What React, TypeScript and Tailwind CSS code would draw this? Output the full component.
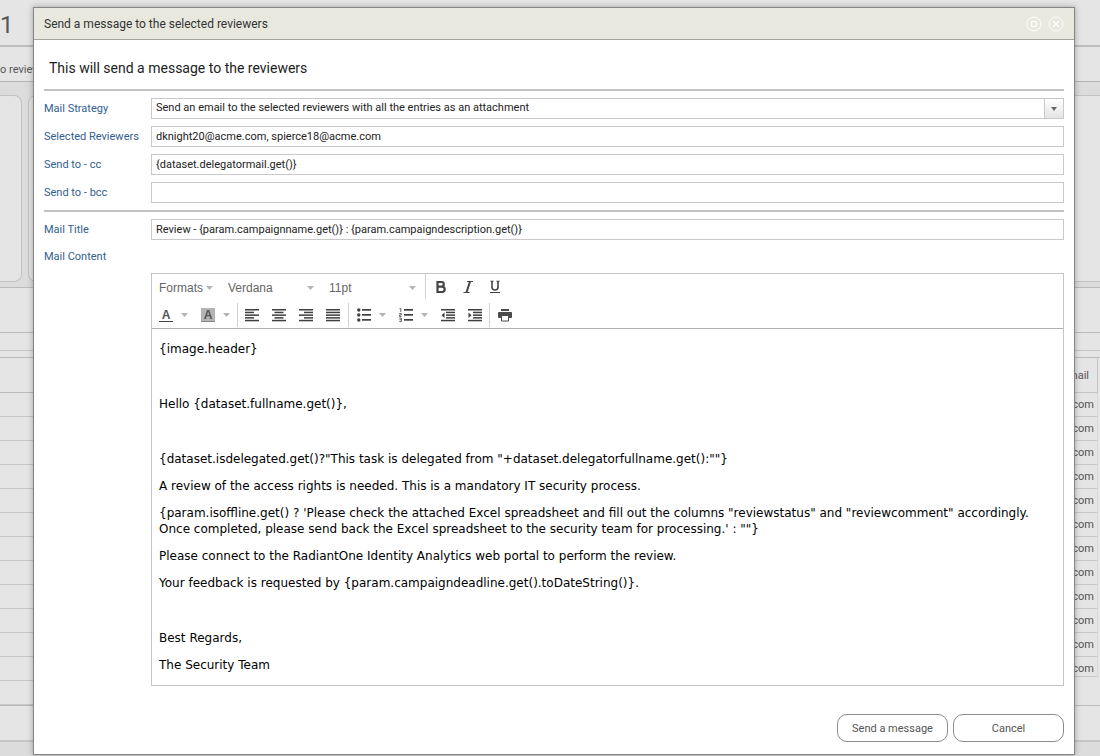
import type { ReactNode } from 'react';

const addresses = Array.from({ length: 12 }, (_, i) => i);
const leftRows = Array.from({ length: 13 }, (_, i) => i);

const fieldClass = "h-[21px] w-full min-w-0 border border-[#c9c9c9] bg-white px-1 text-[11px] text-[#222] focus:outline-none";
const labelClass = "w-[107px] shrink-0 pt-[2px] text-[11px] text-[#31608f]";

function Caret() {
  return (
    <svg width="7" height="4" viewBox="0 0 7 4" fill="#b4b4b4">
      <path d="M0 0h7L3.500 4z" />
    </svg>
  );
}

// a set of horizontal bars, each one [x, y, width]
function Bars({ bars, children }: { bars: number[][]; children?: ReactNode }) {
  return (
    <svg width="14" height="14" viewBox="0 0 14 14" fill="#3f3f3f">
      {bars.map(([x, y, w]) => (
        <rect key={y} x={x} y={y} width={w} height="1.700" />
      ))}
      {children}
    </svg>
  );
}

function AlignIcon({ kind }: { kind: string }) {
  const short = kind === "left" ? 0 : kind === "center" ? 2.5 : 5;
  return (
    <svg width="14" height="14" viewBox="0 0 14 14" fill="#3f3f3f">
      {[1, 3.7, 6.4, 9.1, 11.8].map((y, i) => {
        const full = kind === "justify" || i % 2 === 0;
        return <rect key={y} x={full ? 0 : short} y={y} width={full ? 14 : 9} height="1.500" />;
      })}
    </svg>
  );
}

function IndentIcon({ out }: { out?: boolean }) {
  return (
    <svg width="14" height="14" viewBox="0 0 14 14" fill="#3f3f3f">
      <rect x="0" y="1" width="14" height="1.500" />
      <rect x="5" y="3.700" width="9" height="1.500" />
      <rect x="5" y="6.400" width="9" height="1.500" />
      <rect x="5" y="9.100" width="9" height="1.500" />
      <rect x="0" y="11.800" width="14" height="1.500" />
      <path d={out ? "M3.500 4.500v5.400L0.500 7.200z" : "M0.500 4.500v5.400L3.500 7.200z"} />
    </svg>
  );
}

function BulletIcon() {
  return (
    <Bars bars={[[5, 1, 9], [5, 6, 9], [5, 11, 9]]}>
      <circle cx="1.800" cy="2" r="1.700" />
      <circle cx="1.800" cy="7" r="1.700" />
      <circle cx="1.800" cy="12" r="1.700" />
    </Bars>
  );
}

function NumberIcon() {
  return (
    <Bars bars={[[5, 1, 9], [5, 6, 9], [5, 11, 9]]}>
      <path
        d="M0.500 0.500h1.300v3.500M0.300 5.500h2v1.500h-1.800v1.500h2M0.300 10h2v3.500h-2M0.500 11.700h1.800"
        fill="none"
        stroke="#555"
        strokeWidth="0.900"
      />
    </Bars>
  );
}

function PrintIcon() {
  return (
    <svg width="14" height="14" viewBox="0 0 14 14" fill="#4a4a4a">
      <rect x="3" y="1" width="8" height="2" />
      <path d="M1 4h12a1 1 0 0 1 1 1v4a1 1 0 0 1-1 1H1a1 1 0 0 1-1-1V5a1 1 0 0 1 1-1z" />
      <path d="M3.500 7.500h7V13h-7z" fill="#fff" stroke="#4a4a4a" />
    </svg>
  );
}

function ToolButton({ label, children }: { label: string; children: ReactNode }) {
  return (
    <button type="button" aria-label={label} className="flex h-6 w-[27px] items-center justify-center">
      {children}
    </button>
  );
}

function SplitButton({ label, children }: { label: string; children: ReactNode }) {
  return (
    <button type="button" aria-label={label} className="flex h-6 w-[42px] items-center gap-2 pl-[7px]">
      {children}
      <Caret />
    </button>
  );
}

function ToolSelect({ label, value, width }: { label: string; value: string; width: string }) {
  return (
    <div className={`relative ${width}`}>
      <select aria-label={label} className="h-6 w-full appearance-none bg-transparent pl-[6px] text-xs text-[#666] focus:outline-none">
        <option>{value}</option>
      </select>
      <div className="pointer-events-none absolute inset-y-0 right-[6px] flex items-center">
        <Caret />
      </div>
    </div>
  );
}

function Field({ id, label, value }: { id: string; label: string; value: string }) {
  return (
    <div className="flex items-center">
      <label htmlFor={id} className={labelClass}>{label}</label>
      <input id={id} type="text" defaultValue={value} className={fieldClass} />
    </div>
  );
}

function Backdrop() {
  return (
    <div className="flex min-h-screen flex-col overflow-hidden bg-[#e5e5e5] text-[11px] text-[#555]">
      <div className="h-[47px] border-b-2 border-[#bdbdbd] pt-[9px] text-2xl leading-8">1</div>
      <div className="h-[35px] border-b border-[#b5b5b5] pt-[15px] leading-4">o review</div>
      <div className="flex h-[206px] justify-between border-b border-[#bbb] bg-[#dcdcdc] pt-[13px] pb-[5px]">
        <div className="flex gap-[6px]">
          <div className="w-[22px] rounded-r-lg border border-l-0 border-[#c2c2c2] bg-[#e5e5e5]" />
          <div className="w-10 rounded-l-lg border border-[#c2c2c2] bg-[#e5e5e5]" />
        </div>
        <div className="w-10 border-y border-[#c2c2c2] bg-[#e5e5e5]" />
      </div>
      <div className="h-[45px] border-b border-[#bbb]" />
      <div className="h-[18px] border-b border-[#c4c4c4]" />
      <div className="h-[7px] border-b border-[#bbb]" />
      <div className="flex h-[348px] items-start justify-between border-b border-[#bbb]">
        <div className="w-10">
          <div className="h-[35px] border-b border-[#bbb]" />
          {leftRows.map((row) => (
            <div key={row} className="h-6 border-b border-[#c8c8c8]" />
          ))}
        </div>
        <div className="w-10">
          <div className="mr-[2px] flex h-[35px] items-center justify-end border-r border-b border-[#c4c4c4] pt-[2px] pr-2">mail</div>
          {addresses.map((row) => (
            <div
              key={row}
              className="mr-[2px] flex h-6 items-start justify-end border-r border-b border-[#c8c8c8] border-r-[#d8d8d8] pt-1 pr-[3px] leading-4 last:h-5"
            >
              .com
            </div>
          ))}
        </div>
      </div>
      <div className="h-9 border-b-2 border-[#c6c6c6]" />
      <div className="flex-1 bg-[#dcdcdc]" />
    </div>
  );
}

export default function App() {
  return (
    <div className="relative min-h-screen font-[Roboto,sans-serif]">
      <Backdrop />

      <div
        role="dialog"
        aria-labelledby="dialog-title"
        className="absolute top-[7px] right-[25px] bottom-px left-[33px] flex flex-col border border-[#858585] bg-white shadow-[0_0_6px_rgba(0,0,0,0.3)]"
      >
        <div className="flex h-8 shrink-0 items-center justify-between border-b border-[#a3a39b] bg-[#e8e8df] px-[10px]">
          <h1 id="dialog-title" className="text-xs text-[#333]">Send a message to the selected reviewers</h1>
          <div className="flex gap-[6px]">
            <button type="button" aria-label="Maximize">
              <svg width="16" height="16" viewBox="0 0 16 16" fill="none" stroke="#fff">
                <circle cx="8" cy="8" r="7" />
                <rect x="5.500" y="5.500" width="5" height="5" strokeWidth="1.200" />
              </svg>
            </button>
            <button type="button" aria-label="Close">
              <svg width="16" height="16" viewBox="0 0 16 16" fill="none" stroke="#fff">
                <circle cx="8" cy="8" r="7" />
                <path d="M5 5l6 6M11 5l-6 6" strokeWidth="1.300" />
              </svg>
            </button>
          </div>
        </div>

        <form className="flex flex-1 flex-col px-[10px] pb-3">
          <h2 className="pt-[18px] pb-[11px] pl-[5px] text-sm leading-5 text-[#222]">This will send a message to the reviewers</h2>
          <hr className="border-t-2 border-[#c2c2c2]" />

          <div className="my-[7px] flex flex-col gap-[7px]">
            <div className="flex items-center">
              <label htmlFor="strategy" className={labelClass}>Mail Strategy</label>
              <div className="relative flex flex-1">
                <select id="strategy" className={`${fieldClass} appearance-none`}>
                  <option>Send an email to the selected reviewers with all the entries as an attachment</option>
                </select>
                <div className="pointer-events-none absolute inset-y-0 right-0 flex w-5 items-center justify-center border border-[#c9c9c9] bg-linear-to-b from-white to-[#e4e4e4]">
                  <svg width="6" height="4" viewBox="0 0 6 4" fill="#666">
                    <path d="M0 0h6L3 4z" />
                  </svg>
                </div>
              </div>
            </div>
            <Field id="reviewers" label="Selected Reviewers" value="dknight20@acme.com, spierce18@acme.com" />
            <Field id="cc" label="Send to - cc" value="{dataset.delegatormail.get()}" />
            <Field id="bcc" label="Send to - bcc" value="" />
          </div>
          <hr className="border-t-2 border-[#c2c2c2]" />

          <div className="mt-[7px] flex flex-col gap-[7px]">
            <Field id="title" label="Mail Title" value="Review - {param.campaignname.get()} : {param.campaigndescription.get()}" />
            <div id="content-label" className={`${labelClass} h-[21px] leading-4`}>Mail Content</div>
          </div>

          <div className="mt-[5px] ml-[107px] flex flex-1 flex-col border border-[#c4c4c4]">
            <div className="border-b border-[#b0b0b0] font-['Liberation_Sans',sans-serif]">
              <div className="flex h-[27px] pl-px">
                <div className="flex items-center gap-[3px] pr-[3px]">
                  <ToolSelect label="Formats" value="Formats" width="w-[66px]" />
                  <ToolSelect label="Font family" value="Verdana" width="w-[98px]" />
                  <ToolSelect label="Font size" value="11pt" width="w-[99px]" />
                </div>
                <div className="flex h-[25px] items-center border-l border-[#d0d0d0] px-px text-[#444]">
                  <ToolButton label="Bold">
                    <svg width="14" height="14" viewBox="0 0 14 14" fill="none" stroke="#444" strokeWidth="2.200">
                      <path d="M3.500 2h4a2.300 2.300 0 0 1 0 4.600h-4zM3.500 6.600h4.500a2.700 2.700 0 0 1 0 5.400H3.500z" />
                    </svg>
                  </ToolButton>
                  <ToolButton label="Italic">
                    <svg width="14" height="14" viewBox="0 0 14 14" fill="none" stroke="#444">
                      <path d="M9 1.500L5.500 12.500" strokeWidth="2" />
                      <path d="M6 1.500h6M2.500 12.500h6" />
                    </svg>
                  </ToolButton>
                  <ToolButton label="Underline">
                    <svg width="14" height="14" viewBox="0 0 14 14" fill="none" stroke="#444">
                      <path d="M4 1v6a3 3 0 0 0 6 0V1" strokeWidth="1.600" />
                      <path d="M2 12.500h10M2.500 1.200h3M8.500 1.200h3" />
                    </svg>
                  </ToolButton>
                </div>
              </div>

              <div className="flex h-[27px] items-center">
                <div className="flex pr-px">
                  <SplitButton label="Text color">
                    <span className="h-[14px] w-[14px] border-b border-[#444] text-center text-xs leading-[14px] font-bold text-[#555]">A</span>
                  </SplitButton>
                  <SplitButton label="Background color">
                    <span className="h-[14px] w-[14px] border-b border-[#888] bg-[#b4b4b4] text-center text-xs leading-[14px] font-bold text-[#555]">A</span>
                  </SplitButton>
                </div>
                <div className="flex border-l border-[#d0d0d0] pr-[2px]">
                  <ToolButton label="Align left"><AlignIcon kind="left" /></ToolButton>
                  <ToolButton label="Align center"><AlignIcon kind="center" /></ToolButton>
                  <ToolButton label="Align right"><AlignIcon kind="right" /></ToolButton>
                  <ToolButton label="Justify"><AlignIcon kind="justify" /></ToolButton>
                </div>
                <div className="flex border-l border-[#d0d0d0] px-px">
                  <SplitButton label="Bullet list"><BulletIcon /></SplitButton>
                  <SplitButton label="Numbered list"><NumberIcon /></SplitButton>
                  <ToolButton label="Decrease indent"><IndentIcon out /></ToolButton>
                  <ToolButton label="Increase indent"><IndentIcon /></ToolButton>
                </div>
                <div className="flex border-l border-[#d0d0d0] px-px">
                  <ToolButton label="Print"><PrintIcon /></ToolButton>
                </div>
              </div>
            </div>

            <div
              role="textbox"
              aria-multiline="true"
              aria-labelledby="content-label"
              contentEditable
              suppressContentEditableWarning
              className="flex flex-1 flex-col gap-[11px] px-[7px] pt-3 font-['DejaVu_Sans',sans-serif] text-xs leading-4 text-black focus:outline-none"
            >
              <p>{"{image.header}"}</p>
              <p className="h-[17px]" />
              <p>{"Hello {dataset.fullname.get()},"}</p>
              <p className="h-[17px]" />
              <p>{"{dataset.isdelegated.get()?\"This task is delegated from \"+dataset.delegatorfullname.get():\"\"}"}</p>
              <p>A review of the access rights is needed. This is a mandatory IT security process.</p>
              <p>
                {"{param.isoffline.get() ? 'Please check the attached Excel spreadsheet and fill out the columns \"reviewstatus\" and \"reviewcomment\" accordingly. Once completed, please send back the Excel spreadsheet to the security team for processing.' : \"\"}"}
              </p>
              <p>Please connect to the RadiantOne Identity Analytics web portal to perform the review.</p>
              <p>{"Your feedback is requested by {param.campaigndeadline.get().toDateString()}."}</p>
              <p className="h-[17px]" />
              <p>Best Regards,</p>
              <p>The Security Team</p>
            </div>
          </div>

          <div className="mt-7 flex justify-end gap-[5px]">
            <button type="button" className="h-7 w-[111px] rounded-[10px] border border-[#8c8c8c] bg-white pt-[2px] text-[11px] text-[#555]">Send a message</button>
            <button type="button" className="h-7 w-[111px] rounded-[10px] border border-[#8c8c8c] bg-white pt-[2px] text-[11px] text-[#555]">Cancel</button>
          </div>
        </form>
      </div>
    </div>
  );
}
